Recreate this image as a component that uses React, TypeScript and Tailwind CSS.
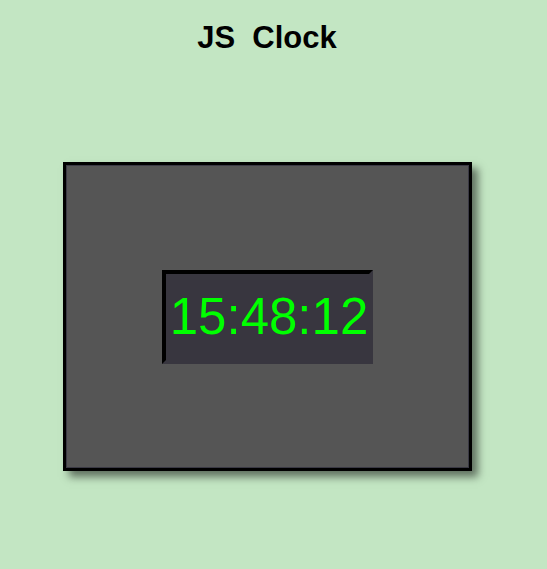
import React from 'react';

export default function App() {
	return (
		<div className="min-h-[569px] w-full bg-[#c3e6c3] font-['Liberation_Sans',Arial,sans-serif]">
			<div className="flex w-[534px] flex-col items-center">
				<h1 className="mt-[20px] h-[36px] whitespace-pre text-[31px] font-bold leading-[36px] text-black">
					JS  Clock
				</h1>
				<div className="mt-[106px] flex h-[309px] w-[409px] items-center justify-center border-[3px] border-black bg-[#555555] shadow-[inset_0_0_0_1px_#3a3944,6px_6px_8px_rgba(0,0,0,0.5)]">
					<div className="flex h-[94px] w-[211px] items-center justify-center border-[4px] border-t-black border-l-black border-r-[#38363f] border-b-[#38363f] bg-[#38363f] pl-[4px]">
						<span className="text-[51px] leading-none text-[#00ff00]">15:48:12</span>
					</div>
				</div>
			</div>
		</div>
	);
}
